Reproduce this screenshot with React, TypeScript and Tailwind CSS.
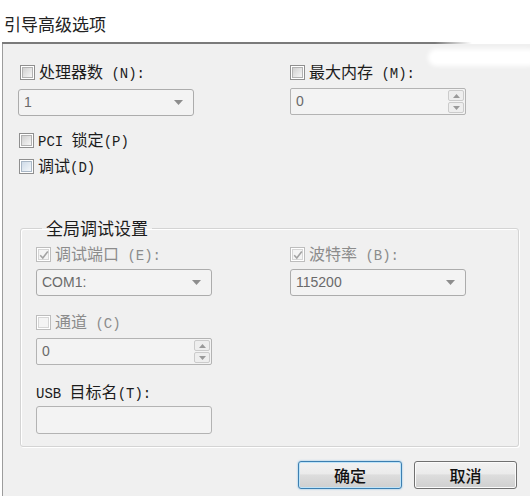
import clsx from 'clsx';

// split a label into CJK runs and ASCII runs (ASCII drawn narrower, like SimSun's half-width glyphs)
function Label({ text, muted }: { text: string; muted?: boolean }) {
  const parts = text.match(/[\x00-\x7f]+|[^\x00-\x7f]+/g) ?? [];
  return (
    <span className={clsx('whitespace-pre text-[16px] leading-[20px]', muted ? 'text-[#8c8c8c]' : 'text-[#1c1c1c]')}>
      {parts.map((p, i) =>
        /[\x00-\x7f]/.test(p[0]) ? (
          <span key={i} className="font-['Liberation_Mono',monospace] text-[14px]">
            {p}
          </span>
        ) : (
          <span key={i}>{p}</span>
        ),
      )}
    </span>
  );
}

function Check({ checked, disabled, tint }: { checked?: boolean; disabled?: boolean; tint?: boolean }) {
  return (
    <span
      className={clsx(
        'relative flex h-[15px] w-[15px] shrink-0 border bg-white p-px',
        disabled ? 'border-[#bdbdbd]' : 'border-[#8f8f8f]',
      )}
    >
      <span
        className={clsx(
          'h-full w-full border',
          disabled
            ? 'border-[#d6d6d6] bg-[#f4f4f4]'
            : tint
              ? 'border-[#a9b7c6] bg-[linear-gradient(135deg,#cfdbe8,#f4f7fa)]'
              : 'border-[#b2b2b2] bg-[linear-gradient(135deg,#d0d0d0,#f6f6f6)]',
        )}
      />
      {checked && (
        <svg className="absolute left-[2px] top-[2px]" width="10" height="10" viewBox="0 0 10 10">
          <path d="M1.2 5.2 L3.8 8 L8.8 1.5" fill="none" stroke="#a3a3a3" strokeWidth="1.6" />
        </svg>
      )}
    </span>
  );
}

function CheckRow({
  label,
  checked,
  disabled,
  tint,
  className,
}: {
  label: string;
  checked?: boolean;
  disabled?: boolean;
  tint?: boolean;
  className?: string;
}) {
  return (
    <div className={clsx('flex h-[20px] items-center gap-[4px]', className)}>
      <Check checked={checked} disabled={disabled} tint={tint} />
      <Label text={label} muted={disabled} />
    </div>
  );
}

function Select({ value, className }: { value: string; className?: string }) {
  return (
    <div
      className={clsx(
        'flex h-[27px] w-[176px] items-center justify-between rounded-[3px] border border-[#acacac] bg-[#f3f3f3] pl-[5px] pr-[10px]',
        className,
      )}
    >
      <span className="font-['Liberation_Sans',sans-serif] text-[14px] text-[#6a6a6a]">{value}</span>
      <svg width="9" height="5" viewBox="0 0 9 5">
        <path d="M0 0h9L4.5 5z" fill="#8d8d8d" />
      </svg>
    </div>
  );
}

function Spin({ value, className }: { value: string; className?: string }) {
  return (
    <div
      className={clsx(
        'flex h-[27px] w-[176px] items-stretch rounded-[2px] border border-[#b3b3b3] bg-[#f3f3f3]',
        className,
      )}
    >
      <span className="flex flex-1 items-center pl-[5px] font-['Liberation_Sans',sans-serif] text-[14px] text-[#6a6a6a]">
        {value}
      </span>
      <div className="flex w-[18px] flex-col gap-px p-px">
        <div className="flex flex-1 items-center justify-center rounded-[2px] border border-[#cbcbcb] bg-[#eeeeee]">
          <svg width="7" height="4" viewBox="0 0 7 4">
            <path d="M0 4h7L3.5 0z" fill="#9a9a9a" />
          </svg>
        </div>
        <div className="flex flex-1 items-center justify-center rounded-[2px] border border-[#cbcbcb] bg-[#eeeeee]">
          <svg width="7" height="4" viewBox="0 0 7 4">
            <path d="M0 0h7L3.5 4z" fill="#9a9a9a" />
          </svg>
        </div>
      </div>
    </div>
  );
}

export default function App() {
  return (
    <div className="relative flex h-[496px] w-[530px] flex-col overflow-hidden bg-white font-['Noto_Sans_CJK_SC',sans-serif]">
      <div className="h-[42px] pl-[4px] pt-[12px] text-[17px] leading-[24px] text-[#222]">引导高级选项</div>
      <div className="ml-[2px] h-[2px] bg-[linear-gradient(to_right,#7a7a7a_0%,#7a7a7a_82%,rgba(122,122,122,0)_89%)]" />

      <div className="ml-[2px] flex flex-1 flex-col border-l border-[#9c9c9c] bg-[#f0f0f0]">
        <div className="pl-[15px] pt-[18px]">
          <div className="grid grid-cols-[272px_176px]">
            <div>
              <CheckRow label="处理器数 (N):" className="ml-[2px]" />
              <Select value="1" className="mt-[7px]" />
            </div>
            <div>
              <CheckRow label="最大内存 (M):" />
              <Spin value="0" className="mt-[6px]" />
            </div>
          </div>

          <CheckRow label="PCI 锁定(P)" className="mt-[14px] ml-[1px]" />
          <CheckRow label="调试(D)" tint className="mt-[6px] ml-[1px]" />

          <fieldset className="ml-[2px] mt-[40px] w-[499px] rounded-[3px] border border-[#d4d4d4] p-0 pb-[12px] pl-[15px] pt-[4px] shadow-[inset_1px_1px_0_#fff,1px_1px_0_#fff]">
            <legend className="ml-[6px] px-[4px] text-[17px] leading-[24px] text-[#1c1c1c]">全局调试设置</legend>
            <div className="grid grid-cols-[254px_176px]">
              <div>
                <CheckRow label="调试端口 (E):" checked disabled />
                <Select value="COM1:" className="mt-[5px]" />
              </div>
              <div>
                <CheckRow label="波特率 (B):" checked disabled />
                <Select value="115200" className="mt-[5px]" />
              </div>
            </div>
            <CheckRow label="通道 (C)" disabled className="mt-[16px]" />
            <Spin value="0" className="mt-[6px]" />
            <div className="mt-[17px] flex h-[20px] items-center">
              <Label text="USB 目标名(T):" />
            </div>
            <div className="mt-[4px] h-[28px] w-[176px] rounded-[3px] border border-[#b3b3b3] bg-[#f3f3f3]" />
          </fieldset>
        </div>

        <div className="mt-[14px] flex justify-end gap-[12px] pr-[13px]">
          <button className="h-[28px] w-[104px] rounded-[3px] border border-[#3c7fb1] bg-[linear-gradient(#f2f2f2,#ebebeb_45%,#dddddd_50%,#cfcfcf)] text-[16px] font-medium text-[#111] shadow-[inset_0_0_0_1px_#bfe4f9,0_0_2px_#6fb6e4]">
            确定
          </button>
          <button className="h-[28px] w-[103px] rounded-[3px] border border-[#707070] bg-[linear-gradient(#f2f2f2,#ebebeb_45%,#dddddd_50%,#cfcfcf)] text-[16px] font-medium text-[#111] shadow-[inset_0_0_0_1px_#fbfbfb]">
            取消
          </button>
        </div>
      </div>

      <div className="absolute left-[428px] top-[49px] h-[17px] w-[110px] rounded-full bg-white blur-[2px]" />
    </div>
  );
}
